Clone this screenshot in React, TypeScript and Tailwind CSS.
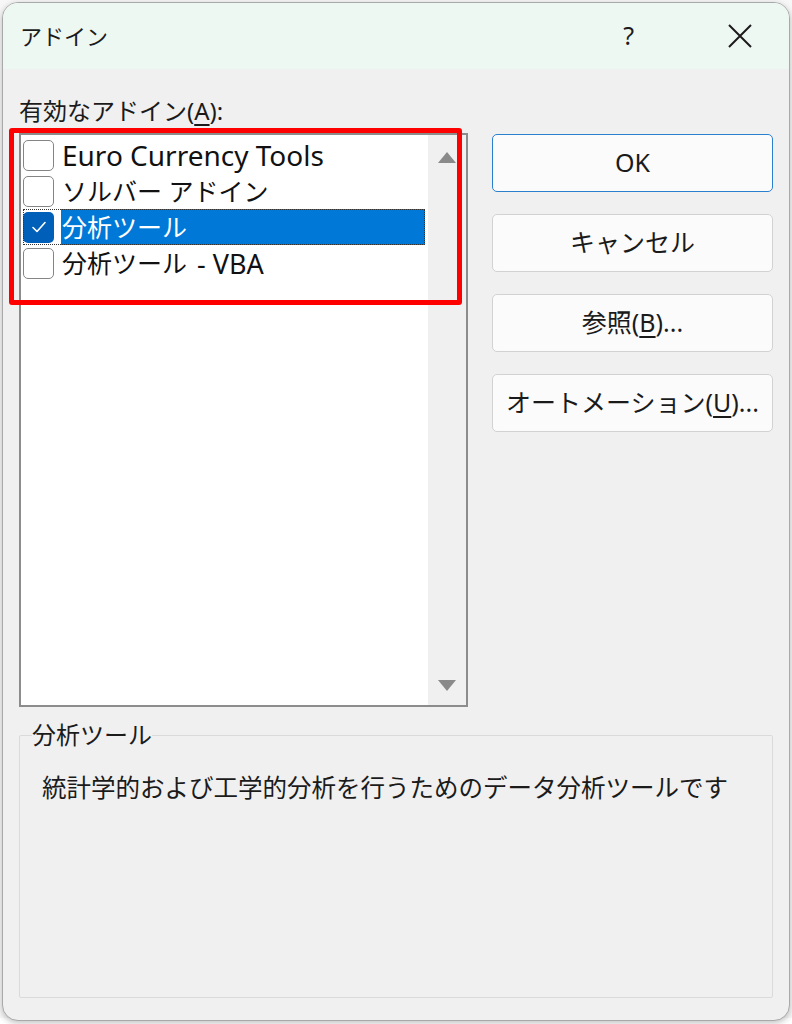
import React from "react";

const FONT = '"Segoe UI", "Noto Sans", "Noto Sans CJK JP", sans-serif';

type Item = { label: React.ReactNode; key: string; checked: boolean; selected: boolean };

const ITEMS: Item[] = [
  { key: "euro", label: <span className="text-[28px]">Euro Currency Tools</span>, checked: false, selected: false },
  { key: "solver", label: "ソルバー アドイン", checked: false, selected: false },
  { key: "atp", label: "分析ツール", checked: true, selected: true },
  {
    key: "atpvba",
    label: (
      <>
        分析ツール<span className="ml-[10px] text-[27px]">- VBA</span>
      </>
    ),
    checked: false,
    selected: false,
  },
];

function CheckBox({ checked }: { checked: boolean }) {
  if (checked) {
    return (
      <span className="flex h-[31px] w-[31px] shrink-0 items-center justify-center rounded-[5px] bg-[#005fb8]">
        <svg width="18" height="18" viewBox="0 0 18 18" fill="none">
          <path d="M3 9.5l4 4 8-9" stroke="#fff" strokeWidth="1.6" strokeLinecap="round" strokeLinejoin="round" />
        </svg>
      </span>
    );
  }
  return <span className="h-[31px] w-[31px] shrink-0 rounded-[5px] border-[1.5px] border-[#858585] bg-white" />;
}

function Row({ item }: { item: Item }) {
  return (
    <div
      className={`flex h-[36px] items-center ${
        item.selected ? "mr-[3px] outline-1 outline-dotted outline-[#333] -outline-offset-1" : ""
      }`}
    >
      <CheckBox checked={item.checked} />
      <span
        className={`ml-[7px] flex h-full flex-1 items-center pl-px text-[25px] leading-none ${
          item.selected ? "bg-[#0078d7] text-white" : "text-[#111]"
        }`}
      >
        {item.label}
      </span>
    </div>
  );
}

function DialogButton({ children, primary }: { children: React.ReactNode; primary?: boolean }) {
  return (
    <button
      className={`flex h-[58px] w-full items-center justify-center rounded-[5px] bg-[#fbfbfb] text-[25px] text-[#1a1a1a] ${
        primary ? "border-[1.5px] border-[#2a7fcf]" : "border border-[#d2d2d2]"
      }`}
    >
      {children}
    </button>
  );
}

export default function App() {
  return (
    <div className="relative h-[1024px] w-[792px] overflow-hidden bg-[#f7f7f7]" style={{ fontFamily: FONT }}>
      <div className="absolute inset-x-0 bottom-0 h-[6px] bg-white" />
      <div className="relative mx-[2px] mt-[2px] flex h-[1019px] flex-col overflow-hidden rounded-[16px] border border-[#a9a9a9] bg-[#f0f0f0] shadow-[0_2px_6px_rgba(0,0,0,0.25)]">
        {/* title bar */}
        <div className="flex h-[66px] shrink-0 items-center bg-[#eef8f2] pl-[17px] pr-[36px]">
          <span className="text-[22px] text-[#1b1b1b]">アドイン</span>
          <span className="ml-auto mr-[93px] text-[25px] text-[#1b1b1b]">?</span>
          <svg width="26" height="26" viewBox="0 0 26 26">
            <path d="M2 2L24 24M24 2L2 24" stroke="#1b1b1b" strokeWidth="2" />
          </svg>
        </div>

        {/* body */}
        <div className="flex flex-1 flex-col px-[16px] pb-[22px]">
          <div className="mt-[22px] h-[40px] text-[24px] leading-[40px] text-[#1b1b1b]">
            有効なアドイン(<span className="underline underline-offset-4">A</span>):
          </div>

          <div className="mt-[2px] flex gap-[24px]">
            {/* list box */}
            <div className="flex h-[574px] w-[449px] border-2 border-[#8c8c8c] bg-white">
              <div className="flex-1 pl-[2px] pt-[2px]">
                {ITEMS.map((item) => (
                  <Row key={item.key} item={item} />
                ))}
              </div>
              <div className="flex w-[38px] flex-col items-center justify-between bg-[#f0f0f0] pb-[14px] pt-[17px]">
                <svg width="18" height="11" viewBox="0 0 18 11">
                  <path d="M9 0L18 11H0z" fill="#8a8a8a" />
                </svg>
                <svg width="18" height="11" viewBox="0 0 18 11">
                  <path d="M0 0H18L9 11z" fill="#8a8a8a" />
                </svg>
              </div>
            </div>

            {/* buttons */}
            <div className="mt-px flex w-[281px] flex-col gap-[22px]">
              <DialogButton primary>OK</DialogButton>
              <DialogButton>キャンセル</DialogButton>
              <DialogButton>
                参照(<span className="underline underline-offset-4">B</span>)...
              </DialogButton>
              <DialogButton>
                オートメーション(<span className="underline underline-offset-4">U</span>)...
              </DialogButton>
            </div>
          </div>

          {/* group box */}
          <div className="relative mt-[28px] flex-1 rounded-[2px] border border-[#dadada]">
            <span className="absolute -top-[19px] left-[12px] bg-[#f0f0f0] text-[24px] leading-[36px] text-[#1b1b1b]">
              分析ツール
            </span>
            <p className="pl-[22px] pt-[34px] text-[24.5px] text-[#1b1b1b]">統計学的および工学的分析を行うためのデータ分析ツールです</p>
          </div>
        </div>

        {/* annotation */}
        <div className="pointer-events-none absolute left-[6px] top-[125px] h-[177px] w-[453px] rounded-[3px] border-[5px] border-[#ff0000]" />
      </div>
    </div>
  );
}
